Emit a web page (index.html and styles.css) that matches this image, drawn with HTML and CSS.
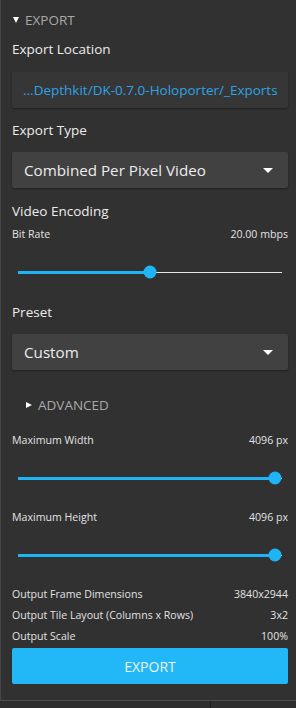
FILE: index.html
```html
<!DOCTYPE html>
<html>
<head>
<meta charset="utf-8">
<link rel="stylesheet" href="styles.css">
</head>
<body>
<div class="panel">
  <div class="section-head"><span class="tri-down"></span><span>EXPORT</span></div>

  <div class="label m9">Export Location</div>
  <div class="path-box m13">...Depthkit/DK-0.7.0-Holoporter/_Exports</div>

  <div class="label m12">Export Type</div>
  <div class="dropdown m12"><span>Combined Per Pixel Video</span><span class="caret"></span></div>

  <div class="label m13">Video Encoding</div>
  <div class="row m5"><span>Bit Rate</span><span>20.00 mbps</span></div>
  <div class="slider m20">
    <div class="track"><div class="fill" style="width:50%"></div><div class="thumb" style="left:50%"></div></div>
  </div>

  <div class="label m20">Preset</div>
  <div class="dropdown m12"><span>Custom</span><span class="caret"></span></div>

  <div class="section-head sub m25"><span class="tri-right"></span><span>ADVANCED</span></div>

  <div class="row m17"><span>Maximum Width</span><span>4096 px</span></div>
  <div class="slider m20">
    <div class="track"><div class="fill" style="width:97.3%"></div><div class="thumb" style="left:97.3%"></div></div>
  </div>

  <div class="row m21"><span>Maximum Height</span><span>4096 px</span></div>
  <div class="slider m20">
    <div class="track"><div class="fill" style="width:97.3%"></div><div class="thumb" style="left:97.3%"></div></div>
  </div>

  <div class="info m21">
    <div class="row"><span>Output Frame Dimensions</span><span>3840x2944</span></div>
    <div class="row"><span>Output Tile Layout (Columns x Rows)</span><span>3x2</span></div>
    <div class="row"><span>Output Scale</span><span>100%</span></div>
  </div>

  <div class="button m4">EXPORT</div>
</div>
<div class="footer"><div class="footer-left"></div><div class="footer-right"></div></div>
</body>
</html>
```
FILE: styles.css
```css
html, body {
  margin: 0;
  padding: 0;
  background: #2c2c2c;
  font-family: "Open Sans", "Noto Sans", sans-serif;
  color: #e8e8e8;
}
.panel {
  width: 296px;
  height: 701px;
  box-sizing: border-box;
  background: #313131;
  border-left: 1px solid #474747;
  border-bottom: 1px solid #4e4e4e;
  padding: 10px 8px 0 11px;
  display: flex;
  flex-direction: column;
}
.footer {
  display: flex;
  height: 7px;
}
.footer-left {
  width: 210px;
  border-right: 1px solid #1c1c1c;
  background: #2e2e2e;
}
.footer-right {
  flex: 1;
  background: #2e2e2e;
}
.section-head {
  height: 20px;
  display: flex;
  align-items: center;
  gap: 6px;
  color: #a9a9a9;
  font-size: 13.5px;
  padding-left: 1px;
}
.section-head.sub {
  padding-left: 14px;
}
.tri-down {
  width: 0; height: 0;
  border-left: 3.5px solid transparent;
  border-right: 3.5px solid transparent;
  border-top: 6px solid #ffffff;
}
.tri-right {
  width: 0; height: 0;
  border-top: 3.5px solid transparent;
  border-bottom: 3.5px solid transparent;
  border-left: 6px solid #ffffff;
}
.label {
  height: 20px;
  line-height: 20px;
  font-size: 13.5px;
  color: #ececec;
}
.path-box {
  height: 36px;
  background: #363636;
  border-radius: 2px;
  box-shadow: 0 1px 2px rgba(0,0,0,0.35);
  color: #2ea3e4;
  font-size: 13.5px;
  display: flex;
  align-items: center;
  padding-left: 11px;
  white-space: nowrap;
  overflow: hidden;
}
.dropdown {
  height: 36px;
  background: #414141;
  border-radius: 2px;
  box-shadow: 0 1px 2px rgba(0,0,0,0.35);
  display: flex;
  align-items: center;
  justify-content: space-between;
  padding: 0 15px 0 12px;
  font-size: 15.2px;
  color: #ececec;
}
.caret {
  width: 0; height: 0;
  border-left: 5px solid transparent;
  border-right: 5px solid transparent;
  border-top: 5px solid #ffffff;
}
.row {
  height: 16px;
  line-height: 16px;
  display: flex;
  justify-content: space-between;
  font-size: 10.6px;
  color: #e2e2e2;
}
.slider {
  height: 20px;
  padding: 0 6px;
  display: flex;
  align-items: center;
}
.track {
  position: relative;
  flex: 1;
  height: 1px;
  background: #e6e6e6;
}
.fill {
  position: absolute;
  left: 0;
  top: -1px;
  height: 3px;
  background: #1fb4f6;
}
.thumb {
  position: absolute;
  top: 0.5px;
  width: 13px;
  height: 13px;
  border-radius: 50%;
  background: #1fb4f6;
  transform: translate(-50%, -50%);
}
.info {
  display: flex;
  flex-direction: column;
  gap: 5px;
}
.button {
  height: 36px;
  background: #22b8f8;
  border-radius: 2px;
  display: flex;
  align-items: center;
  justify-content: center;
  font-size: 14px;
  color: #f2f2f2;
}
.m4 { margin-top: 4px; }
.m5 { margin-top: 5px; }
.m9 { margin-top: 9px; }
.m12 { margin-top: 12px; }
.m13 { margin-top: 13px; }
.m17 { margin-top: 17px; }
.m20 { margin-top: 20px; }
.m21 { margin-top: 21px; }
.m25 { margin-top: 25px; }
```
